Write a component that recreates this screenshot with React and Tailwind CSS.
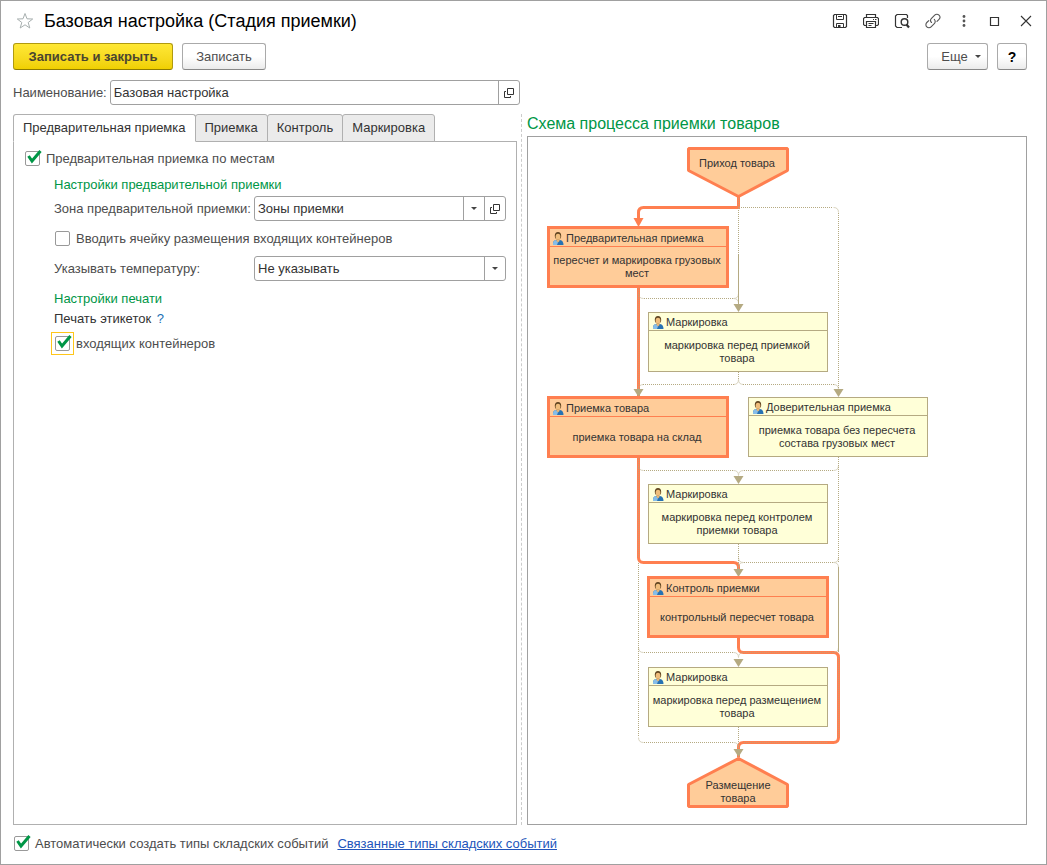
import { useState } from 'react';
import clsx from 'clsx';

const TABS = ['Предварительная приемка', 'Приемка', 'Контроль', 'Маркировка'];

// Diagram steps, placed on the free canvas of the process scheme
const NODES = [
  { x: 20, y: 90, title: 'Предварительная приемка', text: 'пересчет и маркировка грузовых мест', active: true },
  { x: 120, y: 175, title: 'Маркировка', text: 'маркировка перед приемкой товара' },
  { x: 20, y: 260, title: 'Приемка товара', text: 'приемка товара на склад', active: true },
  { x: 220, y: 260, title: 'Доверительная приемка', text: 'приемка товара без пересчета состава грузовых мест' },
  { x: 120, y: 347, title: 'Маркировка', text: 'маркировка перед контролем приемки товара' },
  { x: 120, y: 440, title: 'Контроль приемки', text: 'контрольный пересчет товара', active: true },
  { x: 120, y: 530, title: 'Маркировка', text: 'маркировка перед размещением товара' },
];

function Icon({ children, size = 16 }) {
  return (
    <svg width={size} height={size} viewBox={`0 0 ${size} ${size}`} fill="none" stroke="#333" aria-hidden="true">
      {children}
    </svg>
  );
}

function SaveIcon() {
  return (
    <Icon>
      <path d="M2.500 1.500h11l1 1v11l-1 1h-11l-1-1v-11z" strokeWidth="1.200" />
      <path d="M4.500 1.500v5h7v-5M6 3.500h4" />
      <path d="M4.500 14.500v-4h7v4" />
      <path d="M6 12h2.500v2.500H6z" fill="#333" stroke="none" />
    </Icon>
  );
}

function PrintIcon() {
  return (
    <Icon>
      <path d="M3.500 4.500v-3h9v3" strokeWidth="1.200" />
      <path d="M3.500 12.500h-2l-1-1v-6l1-1h13l1 1v6l-1 1h-2" strokeWidth="1.200" />
      <path d="M3.500 8.500h9v6h-9z" strokeWidth="1.200" />
      <path d="M5.500 10.500h5M5.500 12.500h3M10 6.500h1M12 6.500h1.500" />
    </Icon>
  );
}

function PreviewIcon() {
  return (
    <Icon>
      <path d="M8 14.500H3l-1.500-1.500V3L3 1.500h9.500l1 1V5" strokeWidth="1.200" />
      <circle cx="10.500" cy="9" r="3.300" strokeWidth="1.400" />
      <path d="M12.500 11.500l2.500 3" strokeWidth="2.200" />
    </Icon>
  );
}

function LinkIcon() {
  return (
    <Icon>
      <g stroke="#555" strokeWidth="1.100" strokeLinecap="round">
        <path d="M6.500 9.500a3 3 0 0 1 0-4.200l3.200-3.200a3 3 0 0 1 4.300 0 3 3 0 0 1 0 4.200L12 8.300" />
        <path d="M9.300 6.300a3 3 0 0 1 0 4.300l-3.200 3.200a3 3 0 0 1-4.300 0 3 3 0 0 1 0-4.300l2-1.900" />
      </g>
    </Icon>
  );
}

function MoreIcon() {
  return (
    <Icon>
      <g fill="#555" stroke="none">
        <circle cx="8" cy="3.500" r="1.400" />
        <circle cx="8" cy="8" r="1.400" />
        <circle cx="8" cy="12.500" r="1.400" />
      </g>
    </Icon>
  );
}

function MaximizeIcon() {
  return (
    <Icon>
      <path d="M3.500 4.500h8v8h-8z" strokeWidth="1.200" />
    </Icon>
  );
}

function CloseIcon() {
  return (
    <Icon>
      <path d="M3 3l10 10M13 3L3 13" strokeWidth="1.100" />
    </Icon>
  );
}

function OpenIcon() {
  return (
    <Icon size={10}>
      <path d="M3.500 0.500h6v6h-6z" />
      <path d="M2 3.500H0.500v6h6V8" />
    </Icon>
  );
}

function Arrow() {
  return (
    <svg width="6" height="3" viewBox="0 0 6 3" aria-hidden="true">
      <path d="M0 0h6L3 3z" fill="#444" />
    </svg>
  );
}

function PersonIcon() {
  return (
    <svg className="shrink-0" width="12" height="13" viewBox="0 0 12 13" aria-hidden="true">
      <path d="M1 13q-.5-4.500 3-5h4q3.500.5 3.500 5z" fill="#2672b4" />
      <path d="M1 13q-.5-4.500 3-5l2 2.500-1 2.500z" fill="#86bde8" />
      <path d="M4.500 7h3v2L6 10.500 4.500 9z" fill="#e9b878" />
      <ellipse cx="6" cy="3.800" rx="3.200" ry="3.800" fill="#5f4420" />
      <ellipse cx="6" cy="4.800" rx="2.400" ry="3" fill="#f0be7c" />
    </svg>
  );
}

function Checkbox({ label, defaultChecked, focused }) {
  return (
    <label className="flex items-center">
      <span className={clsx('relative border p-[3px]', focused ? 'border-[#ffc61a]' : 'border-transparent')}>
        <input
          type="checkbox"
          defaultChecked={defaultChecked}
          className="peer block h-[15px] w-[15px] appearance-none rounded-[2px] border border-[#999] bg-white outline-none"
        />
        <svg
          className="pointer-events-none absolute top-[1px] left-[4px] hidden peer-checked:block"
          width="16"
          height="16"
          viewBox="0 0 16 16"
          aria-hidden="true"
        >
          <path d="M2.500 7l3.500 5L14.500 2" fill="none" stroke="#009646" strokeWidth="3" />
        </svg>
      </span>
      <span className="ml-[2px]">{label}</span>
    </label>
  );
}

function TitleBar() {
  const actions = [
    ['Сохранить', SaveIcon],
    ['Печать', PrintIcon],
    ['Предварительный просмотр', PreviewIcon],
    ['Получить ссылку', LinkIcon],
    ['Дополнительно', MoreIcon],
    ['Развернуть', MaximizeIcon],
    ['Закрыть', CloseIcon],
  ];

  return (
    <header className="-mr-[14px] mb-[2px] flex h-10 items-center">
      <button type="button" aria-label="Добавить в избранное" className="ml-[3px]">
        <svg width="18" height="18" viewBox="0 0 18 18" aria-hidden="true">
          <path d="M9 1.500l2 5.300 5.700.2-4.500 3.500 1.600 5.500L9 12.800 4.200 16l1.600-5.500L1.300 7l5.700-.2z" fill="none" stroke="#a8b0b0" />
        </svg>
      </button>
      <h1 className="ml-[10px] flex-1 text-[18px] text-black">Базовая настройка (Стадия приемки)</h1>
      {actions.map(([name, Glyph]) => (
        <button key={name} type="button" aria-label={name} className="flex h-8 w-[31px] items-center justify-center">
          <Glyph />
        </button>
      ))}
    </header>
  );
}

function Toolbar() {
  const base = 'h-[27px] rounded-[3px] border border-[#aaa] border-b-[#888] bg-linear-to-b from-white from-50% to-[#ebebeb]';

  return (
    <div className="flex gap-[9px]">
      <button
        type="button"
        className="h-[27px] w-[160px] rounded-[3px] border border-[#b09a10] border-b-[#8f7c00] bg-linear-to-b from-[#ffe834] to-[#f0d000] font-bold text-[#4a4530]"
      >
        Записать и закрыть
      </button>
      <button type="button" className={clsx(base, 'w-[84px]')}>Записать</button>
      <button type="button" className={clsx(base, 'ml-auto flex w-[61px] items-center justify-center gap-[7px] pl-[7px]')}>
        Еще <Arrow />
      </button>
      <button type="button" aria-label="Справка" className={clsx(base, 'w-[30px] text-[14px] font-bold text-black')}>?</button>
    </div>
  );
}

const fieldBox = 'flex h-[25px] rounded-[3px] border border-[#a0a0a0] bg-white text-[#333]';
const fieldButton = 'flex w-[21px] shrink-0 items-center justify-center border-l border-[#a0a0a0]';

function PreliminaryTab() {
  return (
    <div className="flex flex-col pl-[7px]">
      <div className="mt-[5px] flex h-[23px] items-center">
        <Checkbox label="Предварительная приемка по местам" defaultChecked />
      </div>
      <div className="pr-[10px] pl-[33px]">
        <h2 className="mt-1 h-[22px] leading-[22px] text-[#009646]">Настройки предварительной приемки</h2>
        <div className="flex items-center">
          <label htmlFor="zone" className="w-[200px] shrink-0">Зона предварительной приемки:</label>
          <div className={clsx(fieldBox, 'flex-1')}>
            <input id="zone" defaultValue="Зоны приемки" className="min-w-0 flex-1 px-[3px] outline-none" />
            <button type="button" aria-label="Выбрать из списка" className={fieldButton}><Arrow /></button>
            <button type="button" aria-label="Открыть" className={fieldButton}><OpenIcon /></button>
          </div>
        </div>
        <div className="-ml-[3px] mt-[6px] flex h-[23px] items-center">
          <Checkbox label="Вводить ячейку размещения входящих контейнеров" />
        </div>
        <div className="mt-[6px] flex items-center">
          <label htmlFor="temperature" className="w-[200px] shrink-0">Указывать температуру:</label>
          <div className={clsx(fieldBox, 'relative flex-1')}>
            <select id="temperature" className="flex-1 appearance-none px-[3px] outline-none">
              <option>Не указывать</option>
              <option>Указывать</option>
            </select>
            <span className={clsx(fieldButton, 'pointer-events-none absolute inset-y-0 right-0')}><Arrow /></span>
          </div>
        </div>
        <h2 className="mt-2 h-5 leading-5 text-[#009646]">Настройки печати</h2>
        <p className="h-5 leading-5 text-[#333]">
          Печать этикеток <a href="#help" className="ml-[2px] text-[#1a6fb5]">?</a>
        </p>
        <div className="-ml-[3px] mt-[3px] flex h-[23px] items-center">
          <Checkbox label="входящих контейнеров" defaultChecked focused />
        </div>
      </div>
    </div>
  );
}

function Connectors() {
  return (
    <svg className="absolute top-0 left-0" width="498" height="687" viewBox="0 0 498 687" fill="none" aria-hidden="true">
      {/* route that is currently switched on */}
      <g stroke="#ff7f50" strokeWidth="3">
        <path d="M210.500 60v10.500h-95q-5 0-5 5V84" />
        <path d="M110.500 150v110" />
        <path d="M110.500 320v100.500q0 5 5 5h90q5 0 5 5V436" />
        <path d="M210.500 500v10.500q0 5 5 5h90q5 0 5 5v80q0 5-5 5h-90q-5 0-5 5v10" />
      </g>
      <path d="M105.500 81h10l-5 9z" fill="#ff7f50" />
      {/* other routes: straight runs are dotted, bends are faint */}
      <g stroke="#b5aa82" strokeDasharray="1 1">
        <path d="M211 70.500h94M116 161.500h89M115 247.500h91M215 247.500h91" />
        <path d="M116 333.500h90M216 333.500h89M216 425.500h89M116 515.500h89M116 605.500h89" />
        <path d="M210.500 71v46M310.500 76v177M210.500 235v8M310.500 320v106" />
        <path d="M110.500 426v174M210.500 407v25M210.500 590v22" />
      </g>
      <g stroke="#b5aa82" strokeDasharray="1 1" opacity="0.7">
        <path d="M210.500 61v9M110.500 151v102M110.500 321v99" />
        <path d="M216 515.500h89M310.500 521v80M216 605.500h84" />
      </g>
      <g stroke="#b5aa82" opacity="0.5">
        <path d="M305.500 70.500q5 0 5 5" />
        <path d="M110.500 156.500q0 5 5 5M205.500 161.500q5 0 5-5M205.500 161.500q5 0 5 5" />
        <path d="M210.500 242.500q0 5-5 5M210.500 242.500q0 5 5 5M115.500 247.500q-5 0-5 5M305.500 247.500q5 0 5 5" />
        <path d="M110.500 328.500q0 5 5 5M205.500 333.500q5 0 5 5M215.500 333.500q-5 0-5 5M310.500 328.500q0 5-5 5" />
        <path d="M210.500 420.500q0 5 5 5M215.500 425.500q-5 0-5 5M305.500 425.500q5 0 5-5M305.500 425.500q5 0 5 5" />
        <path d="M110.500 510.500q0 5 5 5M205.500 515.500q5 0 5 5M215.500 515.500q-5 0-5 5M310.500 510.500q0 5-5 5" />
        <path d="M110.500 600.500q0 5 5 5M205.500 605.500q5 0 5 5" />
      </g>
      <path d="M210.500 117v51M310.500 430v85" stroke="#b5aa82" />
      <g fill="#b5aa82">
        <path d="M205.500 167h10l-5 8z" />
        <path d="M105.500 252h10l-5 8z" />
        <path d="M305.500 252h10l-5 8z" />
        <path d="M205.500 339h10l-5 8z" />
        <path d="M205.500 522h10l-5 8z" />
      </g>
      <g fill="#ffcc99" stroke="#ff7f50" strokeWidth="3" strokeLinejoin="bevel">
        <path d="M160.500 11.500h99v22L210.500 59.500l-50-26z" />
        <path d="M160.500 669.500h99v-22L210.500 621.500l-50 26z" />
      </g>
      <path d="M205.500 432h10l-5 8z" fill="#b5aa82" />
      <path d="M205.500 612h10l-5 8z" fill="#b5aa82" />
    </svg>
  );
}

function Step({ x, y, title, text, active }) {
  return (
    <div
      className={clsx(
        'absolute flex h-[60px] w-[180px] flex-col border',
        active
          ? 'border-[#ff7f50] bg-[#ffcc99] outline-1 outline-[#ff7f50] ring-1 ring-inset ring-[#ff7f50]'
          : 'border-[#b5aa82] bg-[#ffffd8]'
      )}
      style={{ left: x, top: y }}
    >
      <div
        className={clsx(
          'flex items-center gap-[2px] border-b pl-[3px]',
          active ? 'h-[19px] border-[#ff7f50] pt-[2px]' : 'h-[18px] border-[#b5aa82] pt-px'
        )}
      >
        <PersonIcon />
        {title}
      </div>
      <div className="flex flex-1 items-center justify-center pt-px pr-[2px] text-center">{text}</div>
    </div>
  );
}

function ProcessScheme() {
  return (
    <section className="flex flex-col">
      <h2 className="h-[22px] text-[16px] leading-[19px] text-[#009646]">Схема процесса приемки товаров</h2>
      <div className="relative min-h-[689px] flex-1 overflow-hidden border border-[#a0a0a0] bg-white text-[11px] leading-[13px] text-[#333]">
        <Connectors />
        <div className="absolute top-[20px] left-[160px] w-[98px] text-center">Приход товара</div>
        {NODES.map((node) => (
          <Step key={`${node.x}-${node.y}`} {...node} />
        ))}
        <div className="absolute top-[642px] left-[170px] w-20 text-center">Размещение товара</div>
      </div>
    </section>
  );
}

export default function App() {
  const [tab, setTab] = useState(0);

  return (
    <div className="flex min-h-screen flex-col border border-[#a0a0a0] bg-white pr-[19px] pl-3 font-['Liberation_Sans',Arial,sans-serif] text-[13px] leading-4 text-[#4d4d4d]">
      <TitleBar />
      <Toolbar />
      <div className="mt-[10px] flex w-1/2 items-center">
        <label htmlFor="name" className="mr-[3px]">Наименование:</label>
        <div className={clsx(fieldBox, 'flex-1')}>
          <input id="name" defaultValue="Базовая настройка" className="min-w-0 flex-1 px-[3px] outline-none" />
          <button type="button" aria-label="Открыть" className={fieldButton}><OpenIcon /></button>
        </div>
      </div>

      <main className="mt-[9px] grid flex-1 grid-cols-[504fr_10px_500fr]">
        <section className="flex flex-col">
          <div role="tablist" className="flex">
            {TABS.map((name, i) => (
              <button
                key={name}
                type="button"
                role="tab"
                aria-selected={tab === i}
                onClick={() => setTab(i)}
                className={clsx(
                  'relative -mr-px h-7 rounded-t-[3px] border border-[#b0b0b0] px-[9px] text-[#333]',
                  tab === i ? 'z-10 border-b-white bg-white' : 'bg-[#ebebeb]'
                )}
              >
                {name}
              </button>
            ))}
          </div>
          <div role="tabpanel" className="-mt-px flex-1 border border-[#b0b0b0]">
            {tab === 0 && <PreliminaryTab />}
          </div>
        </section>
        <div className="ml-1 border-l border-dashed border-[#ccc]" />
        <ProcessScheme />
      </main>

      <footer className="-ml-[3px] flex h-[39px] items-center gap-[9px] pb-[2px]">
        <Checkbox label="Автоматически создать типы складских событий" defaultChecked />
        <a href="#events" className="text-[#2255bb] underline">Связанные типы складских событий</a>
      </footer>
    </div>
  );
}
